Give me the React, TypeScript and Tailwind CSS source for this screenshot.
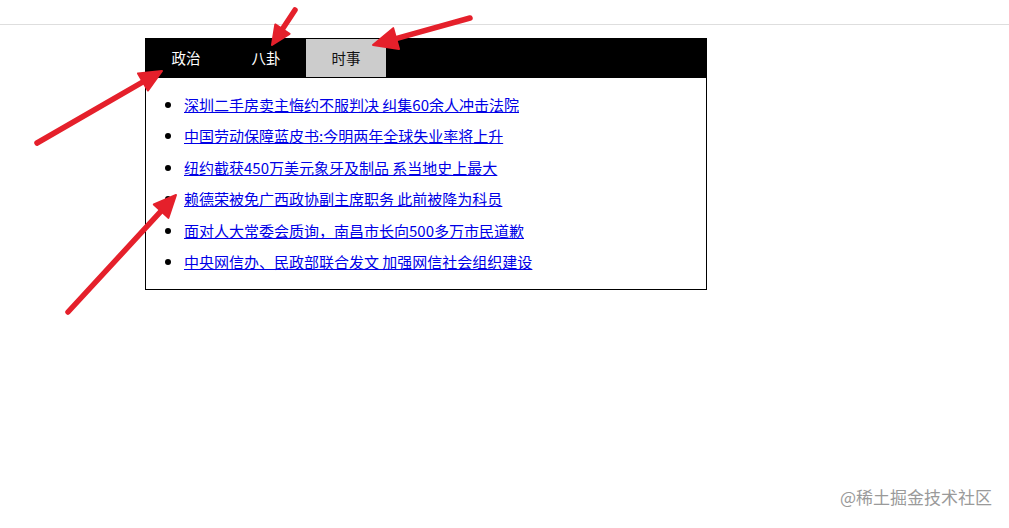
import React from 'react';

const tabs = ['政治', '八卦', '时事'];

const news = [
  '深圳二手房卖主悔约不服判决 纠集60余人冲击法院',
  '中国劳动保障蓝皮书:今明两年全球失业率将上升',
  '纽约截获450万美元象牙及制品 系当地史上最大',
  '赖德荣被免广西政协副主席职务 此前被降为科员',
  '面对人大常委会质询，南昌市长向500多万市民道歉',
  '中央网信办、民政部联合发文 加强网信社会组织建设',
];

// annotation arrows drawn over the page
function Arrow({ x1, y1, x2, y2, head = 22 }: { x1: number; y1: number; x2: number; y2: number; head?: number }) {
  const dx = x2 - x1;
  const dy = y2 - y1;
  const len = Math.hypot(dx, dy);
  const ux = dx / len;
  const uy = dy / len;
  const bx = x2 - ux * head;
  const by = y2 - uy * head;
  const w = head * 0.45;
  const pts = `${x2},${y2} ${bx - uy * w},${by + ux * w} ${bx + uy * w},${by - ux * w}`;
  return (
    <g>
      <line x1={x1} y1={y1} x2={bx + ux * 2} y2={by + uy * 2} stroke="#e5202b" strokeWidth={5.5} strokeLinecap="round" />
      <polygon points={pts} fill="#e5202b" stroke="#e5202b" strokeWidth={2} strokeLinejoin="round" />
    </g>
  );
}

export default function App() {
  const active = 2;

  return (
    <div className="relative w-[1009px] h-[528px] bg-white overflow-hidden" style={{ fontFamily: '"Noto Sans CJK SC", "Noto Sans", sans-serif' }}>
      <div className="h-[25px] border-b border-[#dedede]" />

      <div className="ml-[145px] mt-[13px] w-[562px] border border-black">
        <div className="flex h-[39px] bg-black">
          {tabs.map((t, i) => (
            <div
              key={t}
              className={
                i === active
                  ? 'w-[80px] h-[38px] flex items-center justify-center text-[14.5px] bg-[#cccccc] text-[#111]'
                  : 'w-[80px] h-[38px] flex items-center justify-center text-[14.5px] text-white'
              }
            >
              {t}
            </div>
          ))}
        </div>

        <ul className="list-disc pl-[38px] pt-[11px] pb-[12px] text-[15px] leading-[31.4px] marker:text-[16px]">
          {news.map((n) => (
            <li key={n}>
              <a href="#" className="text-[#0000e6] underline">
                {n}
              </a>
            </li>
          ))}
        </ul>
      </div>

      <svg className="absolute inset-0 pointer-events-none" width={1009} height={528}>
        <Arrow x1={37} y1={143} x2={162} y2={71} />
        <Arrow x1={295} y1={10} x2={272} y2={45} head={19} />
        <Arrow x1={470} y1={18} x2={373} y2={45} head={24} />
        <Arrow x1={68} y1={312} x2={176} y2={195} />
      </svg>

      <div className="absolute right-[17px] bottom-[19px] text-[17px] text-[#9a9a9a]">@稀土掘金技术社区</div>
    </div>
  );
}
